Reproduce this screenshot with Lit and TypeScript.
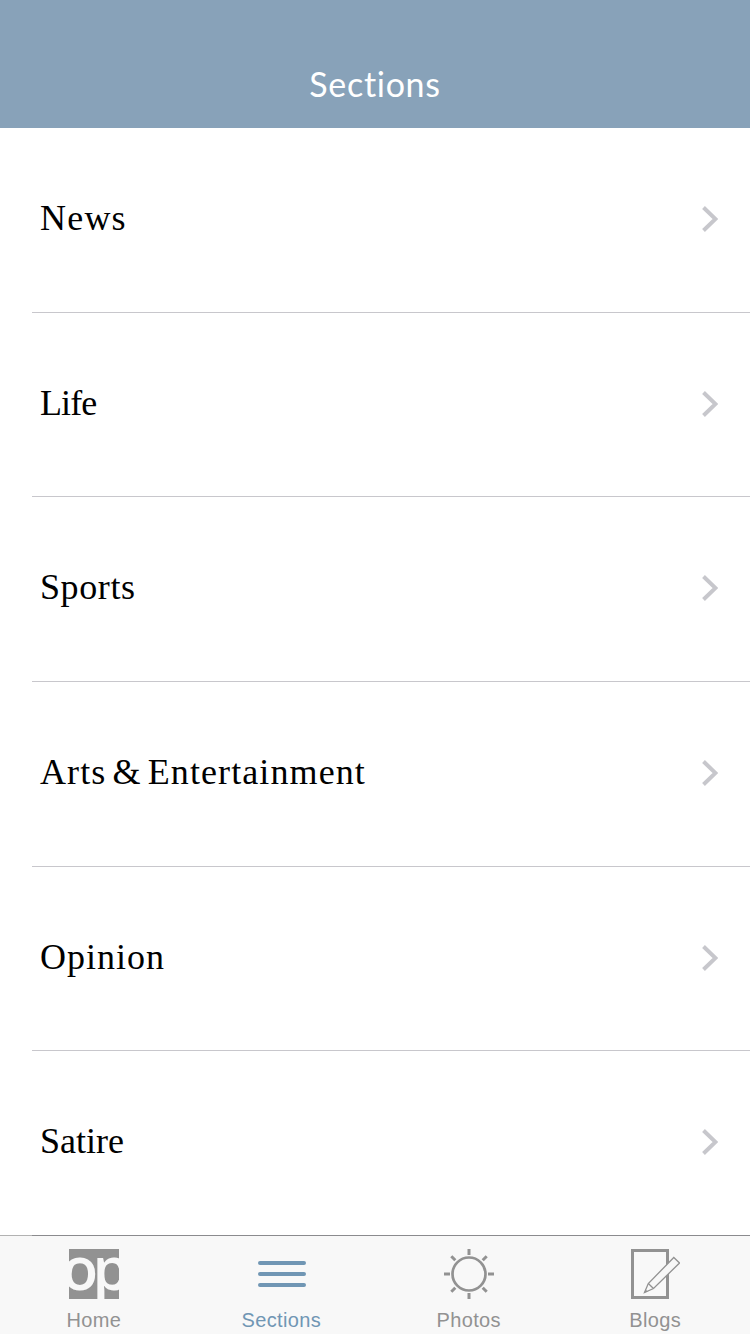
import { LitElement, html, css, svg } from "lit";
import { customElement } from "lit/decorators.js";
import { styleMap } from "lit/directives/style-map.js";

interface Row { label: string; spacing: number; word?: number; }

const rows: Row[] = [
  { label: "News", spacing: 1.2 },
  { label: "Life", spacing: -0.9 },
  { label: "Sports", spacing: 0.6 },
  { label: "Arts & Entertainment", spacing: 1.1, word: -4 },
  { label: "Opinion", spacing: 1 },
  { label: "Satire", spacing: 0 },
];

const homeIcon = svg`
  <rect width="50" height="50" fill="#929292"/>
  <text x="-7.6" y="41.4" font-family="Open Sans" font-weight="600" font-size="60" letter-spacing="-5.5" fill="#f8f8f8">op</text>`;

const sectionsIcon = svg`
  <path d="M4 14H48M4 25H48M4 36H48" stroke="#7096b4" stroke-width="4" stroke-linecap="round"/>`;

const photosIcon = svg`
  <g fill="none" stroke="#929292" stroke-width="3">
    <circle cx="25" cy="25" r="16.5" stroke-width="2.7"/>
    <path d="M25 0V6M25 44V50M0 25H6M44 25H50M7.3 7.3L11.3 11.3M38.7 38.7L42.7 42.7M42.7 7.3L38.7 11.3M11.3 38.7L7.3 42.7"/>
  </g>`;

const blogsIcon = svg`
  <rect x="2.5" y="1.5" width="35" height="47" fill="none" stroke="#929292" stroke-width="3"/>
  <path d="M14.5 43.5L18.3 34.5L43.8 8.5L49.5 14L23.5 39.5Z" fill="#f8f8f8" stroke="#929292" stroke-width="1.3"/>
  <path d="M18.3 34.5L23.5 39.5" stroke="#929292" stroke-width="1.3"/>
  <path d="M14.2 43.8L15.6 40.4L17.8 42.4Z" fill="#929292"/>`;

const tabs = [
  { label: "Home", icon: homeIcon, active: false },
  { label: "Sections", icon: sectionsIcon, active: true },
  { label: "Photos", icon: photosIcon, active: false },
  { label: "Blogs", icon: blogsIcon, active: false },
];

@customElement("app-root")
export class AppRoot extends LitElement {
  static styles = css`
    :host { display: flex; flex-direction: column; width: 750px; height: 1334px; overflow: hidden; background: #fff; }
    .header {
      height: 128px; box-sizing: border-box; padding-top: 40px; flex: none;
      display: flex; align-items: center; justify-content: center;
      background: #88a2b9; color: #fff;
      font: 400 34px/88px Lato, sans-serif; letter-spacing: 0.7px;
    }
    .list { flex: none; height: 1108px; display: grid; grid-template-rows: repeat(6, 1fr); padding-left: 32px; }
    .row {
      display: flex; align-items: center; justify-content: space-between;
      box-sizing: border-box; padding: 0 32px 3.4px 8px; border-bottom: 1px solid #c8c7cc;
    }
    .label { font: 400 36px/44px "Liberation Serif", serif; color: #000; white-space: nowrap; }
    .chevron { width: 16px; height: 26px; display: block; margin-top: 1.8px; }
    .tabs {
      flex: none; height: 99px; margin-top: -1px; box-sizing: border-box; position: relative;
      display: grid; grid-template-columns: repeat(4, 1fr);
      border-top: 1px solid rgba(0, 0, 0, 0.3);
      background: #f8f8f8 padding-box;
    }
    .tab {
      display: flex; flex-direction: column; align-items: center; padding-top: 13px;
      color: #929292; font: 400 20px/24px "Liberation Sans", sans-serif; letter-spacing: 0.35px;
    }
    .tab:last-child { padding-right: 2px; }
    .active { color: #7096b4; }
    .icon { width: 50px; height: 50px; display: block; margin-bottom: 9px; overflow: hidden; }
  `;

  render() {
    return html`
      <div class="header"><span>Sections</span></div>
      <div class="list">
        ${rows.map((r) => html`
          <div class="row">
            <span class="label" style=${styleMap({ letterSpacing: `${r.spacing}px`, wordSpacing: `${r.word ?? 0}px` })}>${r.label}</span>
            <svg class="chevron" viewBox="0 0 16 26"><path d="M1.5 1.5L13.5 13L1.5 24.5" fill="none" stroke="#c7c7cc" stroke-width="4"/></svg>
          </div>`)}
      </div>
      <div class="tabs">
        ${tabs.map((t) => html`
          <div class="tab ${t.active ? "active" : ""}">
            <svg class="icon" viewBox="0 0 50 50">${t.icon}</svg>
            <span>${t.label}</span>
          </div>`)}
      </div>`;
  }
}
